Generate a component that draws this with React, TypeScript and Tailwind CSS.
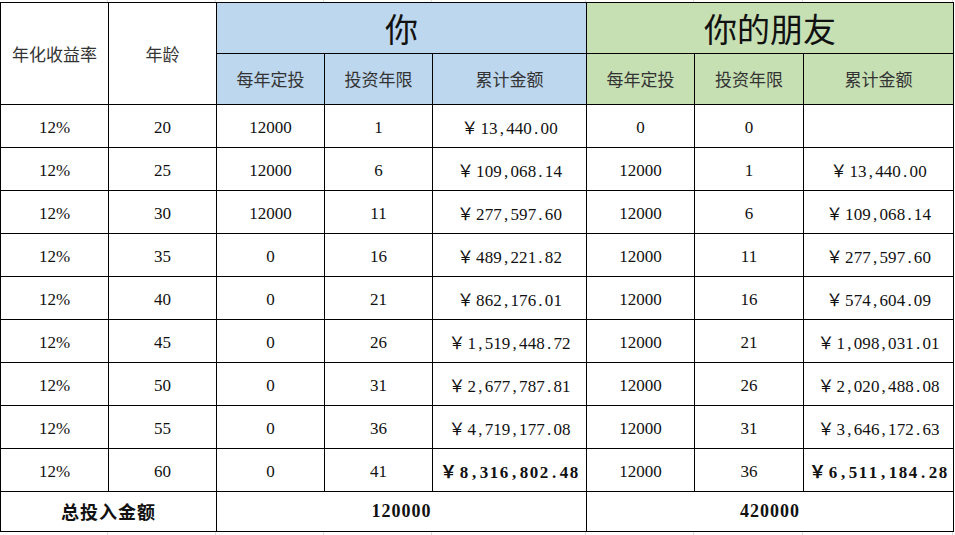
import React from 'react'

const serif = "font-['Liberation_Serif','Noto_Sans_CJK_SC',serif]"
const cjk = "font-['Noto_Sans_CJK_SC',sans-serif]"

type Row = {
  rate: string
  age: number
  youYearly: number
  youYears: number
  youTotal: string
  friendYearly: number
  friendYears: number
  friendTotal: string
}

const rows: Row[] = [
  { rate: '12%', age: 20, youYearly: 12000, youYears: 1, youTotal: '13,440.00', friendYearly: 0, friendYears: 0, friendTotal: '' },
  { rate: '12%', age: 25, youYearly: 12000, youYears: 6, youTotal: '109,068.14', friendYearly: 12000, friendYears: 1, friendTotal: '13,440.00' },
  { rate: '12%', age: 30, youYearly: 12000, youYears: 11, youTotal: '277,597.60', friendYearly: 12000, friendYears: 6, friendTotal: '109,068.14' },
  { rate: '12%', age: 35, youYearly: 0, youYears: 16, youTotal: '489,221.82', friendYearly: 12000, friendYears: 11, friendTotal: '277,597.60' },
  { rate: '12%', age: 40, youYearly: 0, youYears: 21, youTotal: '862,176.01', friendYearly: 12000, friendYears: 16, friendTotal: '574,604.09' },
  { rate: '12%', age: 45, youYearly: 0, youYears: 26, youTotal: '1,519,448.72', friendYearly: 12000, friendYears: 21, friendTotal: '1,098,031.01' },
  { rate: '12%', age: 50, youYearly: 0, youYears: 31, youTotal: '2,677,787.81', friendYearly: 12000, friendYears: 26, friendTotal: '2,020,488.08' },
  { rate: '12%', age: 55, youYearly: 0, youYears: 36, youTotal: '4,719,177.08', friendYearly: 12000, friendYears: 31, friendTotal: '3,646,172.63' },
  { rate: '12%', age: 60, youYearly: 0, youYears: 41, youTotal: '8,316,802.48', friendYearly: 12000, friendYears: 36, friendTotal: '6,511,184.28' },
]

// column widths, shared by the table and the faint sheet gridlines around it
const widths = ['w-[108px]', 'w-[108px]', 'w-[108px]', 'w-[108px]', 'w-[154px]', 'w-[108px]', 'w-[109px]', 'w-[150px]']

// Excel/SimSun style: full-width yen sign, punctuation takes a whole digit slot
function Money({ value, bold }: { value: string; bold?: boolean }) {
  if (!value) return null
  const slot = bold ? 'inline-block w-[10px]' : 'inline-block w-[8.6px]'
  return (
    <span className={`inline-flex items-baseline ${bold ? 'font-bold' : ''}`}>
      <span className={`${cjk} inline-block w-[19px] text-left`}>￥</span>
      {value.split('').map((ch, i) => (
        <span key={i} className={slot}>
          {ch}
        </span>
      ))}
    </span>
  )
}

function Gridlines({ h }: { h: string }) {
  return (
    <div className={`flex ${h}`}>
      {widths.map((w, i) => (
        <div key={i} className={`${w} shrink-0 border-r border-[#dcdcdc]`} />
      ))}
    </div>
  )
}

const cell = 'border border-black text-center align-middle p-0'
const data = `${cell} pt-[4px]`
const sub = `${cell} ${cjk} font-normal text-[17px] text-[#333]`

export default function App() {
  return (
    <div className="w-[955px] h-[535px] bg-white overflow-hidden">
      <Gridlines h="h-[2px]" />
      <table className={`border-collapse table-fixed w-[953px] text-[17px] text-[#111] ${serif}`}>
        <colgroup>
          {widths.map((w, i) => (
            <col key={i} className={w} />
          ))}
        </colgroup>
        <thead>
          <tr className="h-[51px]">
            <th rowSpan={2} className={sub}>年化收益率</th>
            <th rowSpan={2} className={sub}>年龄</th>
            <th colSpan={3} className={`${cell} ${cjk} bg-[#bdd7ee] font-normal text-[33px] leading-none text-[#111]`}>你</th>
            <th colSpan={3} className={`${cell} ${cjk} bg-[#c6e0b4] font-normal text-[33px] leading-none text-[#111]`}>你的朋友</th>
          </tr>
          <tr className="h-[51px]">
            <th className={`${sub} bg-[#bdd7ee]`}>每年定投</th>
            <th className={`${sub} bg-[#bdd7ee]`}>投资年限</th>
            <th className={`${sub} bg-[#bdd7ee]`}>累计金额</th>
            <th className={`${sub} bg-[#c6e0b4]`}>每年定投</th>
            <th className={`${sub} bg-[#c6e0b4]`}>投资年限</th>
            <th className={`${sub} bg-[#c6e0b4]`}>累计金额</th>
          </tr>
        </thead>
        <tbody>
          {rows.map((r, i) => {
            const last = i === rows.length - 1
            return (
              <tr key={r.age} className="h-[43px]">
                <td className={data}>{r.rate}</td>
                <td className={data}>{r.age}</td>
                <td className={data}>{r.youYearly}</td>
                <td className={data}>{r.youYears}</td>
                <td className={data}>
                  <Money value={r.youTotal} bold={last} />
                </td>
                <td className={data}>{r.friendYearly}</td>
                <td className={data}>{r.friendYears}</td>
                <td className={data}>
                  <Money value={r.friendTotal} bold={last} />
                </td>
              </tr>
            )
          })}
          <tr className="h-[40px] font-bold">
            <td colSpan={2} className={`${cell} ${cjk} text-[18px] tracking-[1px]`}>总投入金额</td>
            <td colSpan={3} className={`${cell} text-[18px] tracking-[1px]`}>120000</td>
            <td colSpan={3} className={`${cell} text-[18px] tracking-[1px]`}>420000</td>
          </tr>
        </tbody>
      </table>
      <Gridlines h="h-[4px]" />
    </div>
  )
}
